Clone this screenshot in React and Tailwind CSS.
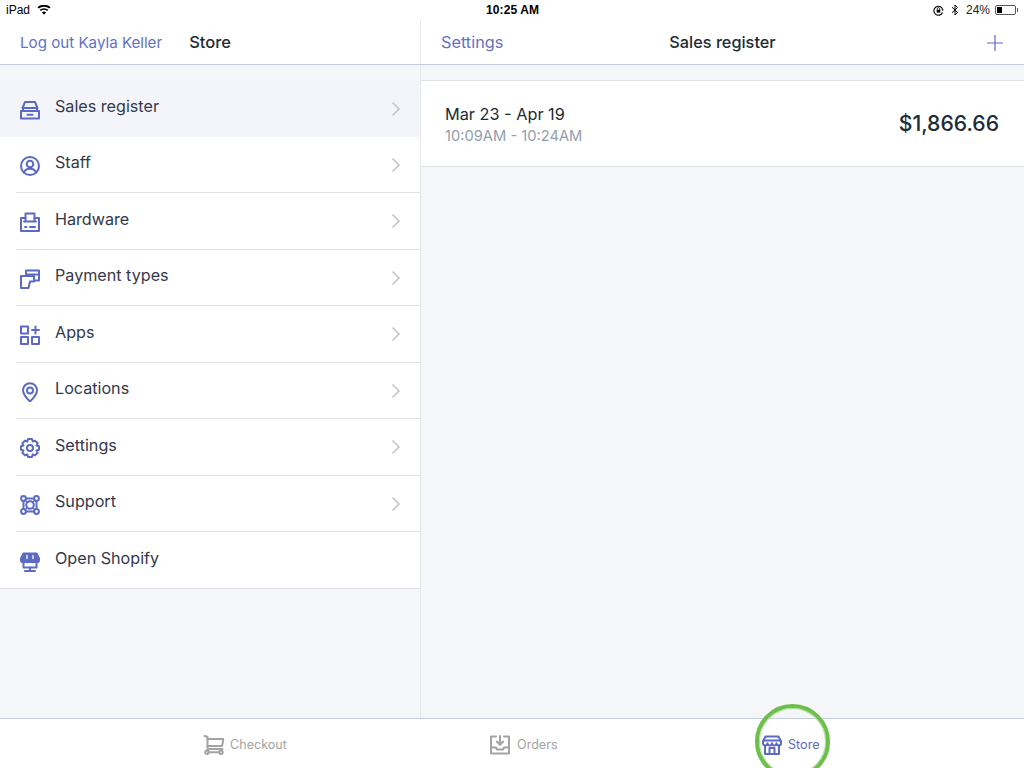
import React from "react";

const S = ({ children, w = 20, h = 20, vb = "0 0 20 20", className = "" }) => (
  <svg width={w} height={h} viewBox={vb} fill="none" stroke="currentColor" strokeWidth="2" strokeLinejoin="round" strokeLinecap="round" className={className}>
    {children}
  </svg>
);

const icons = {
  register: (
    <S>
      <path d="M5 2h10l2.500 6h-15z" />
      <path d="M1 11h18v7.500H1z" />
      <path d="M7.500 14.800h5" />
      <path d="M3 8v3M17 8v3" />
    </S>
  ),
  staff: (
    <S>
      <circle cx="10" cy="10" r="9" />
      <circle cx="10" cy="8" r="3.300" />
      <path d="M4 16.500c1-2.800 3.300-3.800 6-3.800s5 1 6 3.800" />
    </S>
  ),
  hardware: (
    <S>
      <path d="M5.500 9V1.500h9V9" />
      <path d="M5.500 6H1v13h18V6h-4.500" />
      <path d="M4 9.500h12" />
      <path d="M5 15h1.500M10 15h5" />
    </S>
  ),
  payment: (
    <S>
      <path d="M6 5V1.500h13v10h-5" />
      <path d="M6 5.500h13" />
      <path d="M1 7h13v5.500h-4L8.500 19H1z" />
    </S>
  ),
  apps: (
    <S>
      <path d="M1 1.500h7V8.500H1zM1 12h7v7H1zM12 12h7v7h-7z" />
      <path d="M15.500 1.500v7M12 5h7" />
    </S>
  ),
  location: (
    <S>
      <path d="M10 19.500c-1-1-7-6.500-7-11.300a7 7 0 0 1 14 0c0 4.800-6 10.300-7 11.300z" />
      <circle cx="10" cy="8.500" r="3" />
    </S>
  ),
  settings: (
    <S>
      <path d="M8 1h4l.7 2.600 2.300-1 2.700 2.700-1.200 2.200L19 8.200v3.600l-2.500.7 1.200 2.200-2.700 2.700-2.300-1L12 19H8l-.7-2.600-2.300 1-2.700-2.700 1.200-2.200L1 11.800V8.200l2.500-.7-1.200-2.200L5 2.600l2.300 1z" />
      <circle cx="10" cy="10" r="3" />
    </S>
  ),
  support: (
    <S>
      <path d="M3.500 6v8M16.500 6v8M6 3.500h8M6 16.500h8" />
      <circle cx="10" cy="10" r="3.800" />
      <circle cx="3.500" cy="3.500" r="2.400" />
      <circle cx="16.500" cy="3.500" r="2.400" />
      <circle cx="3.500" cy="16.500" r="2.400" />
      <circle cx="16.500" cy="16.500" r="2.400" />
      <path d="M5 5l2.500 2.500M15 5l-2.500 2.500M5 15l2.500-2.500M15 15l-2.500-2.500" strokeWidth="1.400" />
    </S>
  ),
  shopify: (
    <S>
      <path d="M3.500 1.500h13L19 6.500v1.500a2 2 0 0 1-4.500 0 2.200 2.200 0 0 1-4.500 0 2.200 2.200 0 0 1-4.500 0 2 2 0 0 1-4.500 0V6.500z" fill="currentColor" />
      <path d="M3.500 10v5.500h13V10" />
      <path d="M10 15.500V19M5 19h10" />
      <path d="M7 3.500v3M13 3.500v3" stroke="#fff" strokeWidth="1.300" />
    </S>
  ),
  cart: (
    <S w={21} h={20}>
      <path d="M1 1l3 .7V14h15" />
      <path d="M4 4h16l-1.500 7H4" />
      <circle cx="3.500" cy="17.300" r="1.700" />
      <circle cx="17.500" cy="17.300" r="1.700" />
      <path d="M5 17.300h10.800" />
    </S>
  ),
  orders: (
    <S>
      <path d="M6 1.500H1v17h18v-17h-5" />
      <path d="M10 1v8M6.800 6.500 10 9.800l3.200-3.300" />
      <path d="M1 12.500h5l1 2h6l1-2h5" />
    </S>
  ),
  store: (
    <S>
      <path d="M3.500 1.500h13L19 6.500v1.800a2 2 0 0 1-4.500 0 2.200 2.200 0 0 1-4.500 0 2.200 2.200 0 0 1-4.500 0 2 2 0 0 1-4.500 0V6.500z" />
      <path d="M1.500 5.500h17" />
      <path d="M3 10.500V19h14v-8.500" />
      <path d="M7.500 19v-6h5v6" />
    </S>
  ),
};

const rows = [
  ["Sales register", "register", true],
  ["Staff", "staff"],
  ["Hardware", "hardware"],
  ["Payment types", "payment"],
  ["Apps", "apps"],
  ["Locations", "location"],
  ["Settings", "settings"],
  ["Support", "support"],
];

const Chevron = () => (
  <svg width="10" height="16" viewBox="0 0 10 16" fill="none" stroke="#c4c6c9" strokeWidth="1.600" className="mt-[1px]">
    <path d="M1.500 1.500 8 8l-6.500 6.500" />
  </svg>
);

function Row({ label, icon, selected, chevron = true, last }) {
  return (
    <div className={`flex shrink-0 pl-[16px] ${last ? "h-[56px]" : "h-[56.5px]"} ${selected ? "bg-[#f4f5fa]" : "bg-white"}`}>
      <div className={`flex flex-1 items-center pr-[19px] ${last || selected ? "" : "border-b border-[#dfe3e8]"}`}>
        <div className="ml-[4px] mt-[3px] w-[35px] text-[#5c6ac4]">{icons[icon]}</div>
        <div className="flex-1 pb-[4px] text-[16.15px] text-[#33394a]">{label}</div>
        {chevron && <Chevron />}
      </div>
    </div>
  );
}

export default function App() {
  return (
    <div className="relative flex h-[768px] w-[1024px] flex-col overflow-hidden bg-white font-['Inter',sans-serif]">
      <div className="flex h-[20px] shrink-0 items-center text-[12px] text-black font-['Liberation_Sans',sans-serif]">
        <div className="flex w-[420px] items-center pl-[6px]">
          <span>iPad</span>
          <svg width="14" height="10" viewBox="0 0 14 10" className="ml-[7px]" fill="#000">
            <path d="M7 9.800 4.900 7.300a3.200 3.200 0 0 1 4.200 0z" />
            <path d="M3.800 6.100 2.700 4.800a6.600 6.600 0 0 1 8.600 0l-1.100 1.300a5 5 0 0 0-6.400 0z" />
            <path d="M1.700 3.600.4 2.200a10 10 0 0 1 13.200 0l-1.300 1.400a8.300 8.300 0 0 0-10.600 0z" />
          </svg>
        </div>
        <div className="flex-1 pl-[66px] font-bold tracking-[0.1px]">10:25 AM</div>
        <div className="flex items-center pr-[6px]">
          <svg width="11" height="11" viewBox="0 0 11 11" fill="none" stroke="#000" strokeWidth="1.100">
            <path d="M9.500 7.500a4.500 4.500 0 1 1 .2-3" />
            <rect x="3.700" y="4.800" width="3.600" height="2.800" fill="#000" stroke="none" />
            <path d="M4.300 5V3.800a1.200 1.200 0 0 1 2.400 0V5" strokeWidth=".8" />
            <path d="M8.500 4.500h2.300L9.700 6z" fill="#000" stroke="none" />
          </svg>
          <svg width="8" height="12" viewBox="0 0 8 12" fill="none" stroke="#000" strokeWidth="1" className="ml-[7px]">
            <path d="M1 3.200 6.500 8.500 4 11V1l2.500 2.500L1 8.800" />
          </svg>
          <span className="ml-[7px] text-[#222]">24%</span>
          <div className="ml-[5px] flex h-[10px] w-[21px] rounded-[2px] border border-[#555] p-[1px]">
            <div className="w-[5px] bg-black" />
          </div>
          <div className="ml-[1px] h-[4px] w-[1px] bg-[#555]" />
        </div>
      </div>

      <div className="flex h-[45px] shrink-0 border-b border-[#c4cdd5]">
        <div className="flex w-[421px] items-center border-r border-[#e4e7ec] pl-[20px]">
          <span className="pt-[2px] text-[15.15px] text-[#6371c7]">Log out Kayla Keller</span>
          <span className="ml-[27px] text-[16.5px] font-medium text-[#212b36]">Store</span>
        </div>
        <div className="flex flex-1 items-center justify-between pl-[20px] pr-[20px] text-[16.3px]">
          <span className="w-[100px] text-[#6371c7]">Settings</span>
          <span className="font-medium text-[#212b36]">Sales register</span>
          <div className="flex w-[100px] justify-end">
            <svg width="18" height="18" viewBox="0 0 18 18" stroke="#5c6ac4" strokeWidth="1.200" className="mt-[1px]">
              <path d="M9 1v16M1 9h16" />
            </svg>
          </div>
        </div>
      </div>

      <div className="flex min-h-0 flex-1 bg-[#f4f6f8]">
        <div className="w-[421px] shrink-0 border-r border-[#e4e7ec] pt-[15px]">
          <div className="border-b border-[#dfe3e8]">
            {rows.map(([label, icon, selected]) => (
              <Row key={label} label={label} icon={icon} selected={selected} />
            ))}
            <Row label="Open Shopify" icon="shopify" chevron={false} last />
          </div>
        </div>
        <div className="flex-1 pt-[15px]">
          <div className="flex h-[87px] items-center justify-between border-y border-[#dfe3e8] bg-white pl-[24px] pr-[25px]">
            <div className="flex flex-col pt-[2px]">
              <span className="text-[16.3px] leading-[22px] text-[#212b36]">Mar 23 - Apr 19</span>
              <span className="text-[14.7px] leading-[22px] text-[#919eab]">10:09AM - 10:24AM</span>
            </div>
            <span className="text-[21.2px] font-medium text-[#212b36]">$1,866.66</span>
          </div>
        </div>
      </div>

      <div className="flex h-[50px] shrink-0 items-center border-t border-[#c4cdd5] bg-white pl-[203px] pt-[3px] text-[12.6px]">
        <div className="flex w-[287px] items-center text-[#a3a3a3]">
          <span className="w-[27px]">{icons.cart}</span>
          <span>Checkout</span>
        </div>
        <div className="flex w-[272px] items-center text-[#a3a3a3]">
          <span className="w-[27px]">{icons.orders}</span>
          <span>Orders</span>
        </div>
        <div className="flex items-center text-[#5c6ac4]">
          <span className="w-[26px]">{icons.store}</span>
          <span>Store</span>
        </div>
      </div>

      <div className="absolute left-[755px] top-[704px] h-[75px] w-[75px] rounded-full border-[4px] border-[#6cc04a] shadow-[inset_0_0_0_1px_#b5dc9f]" />
    </div>
  );
}
